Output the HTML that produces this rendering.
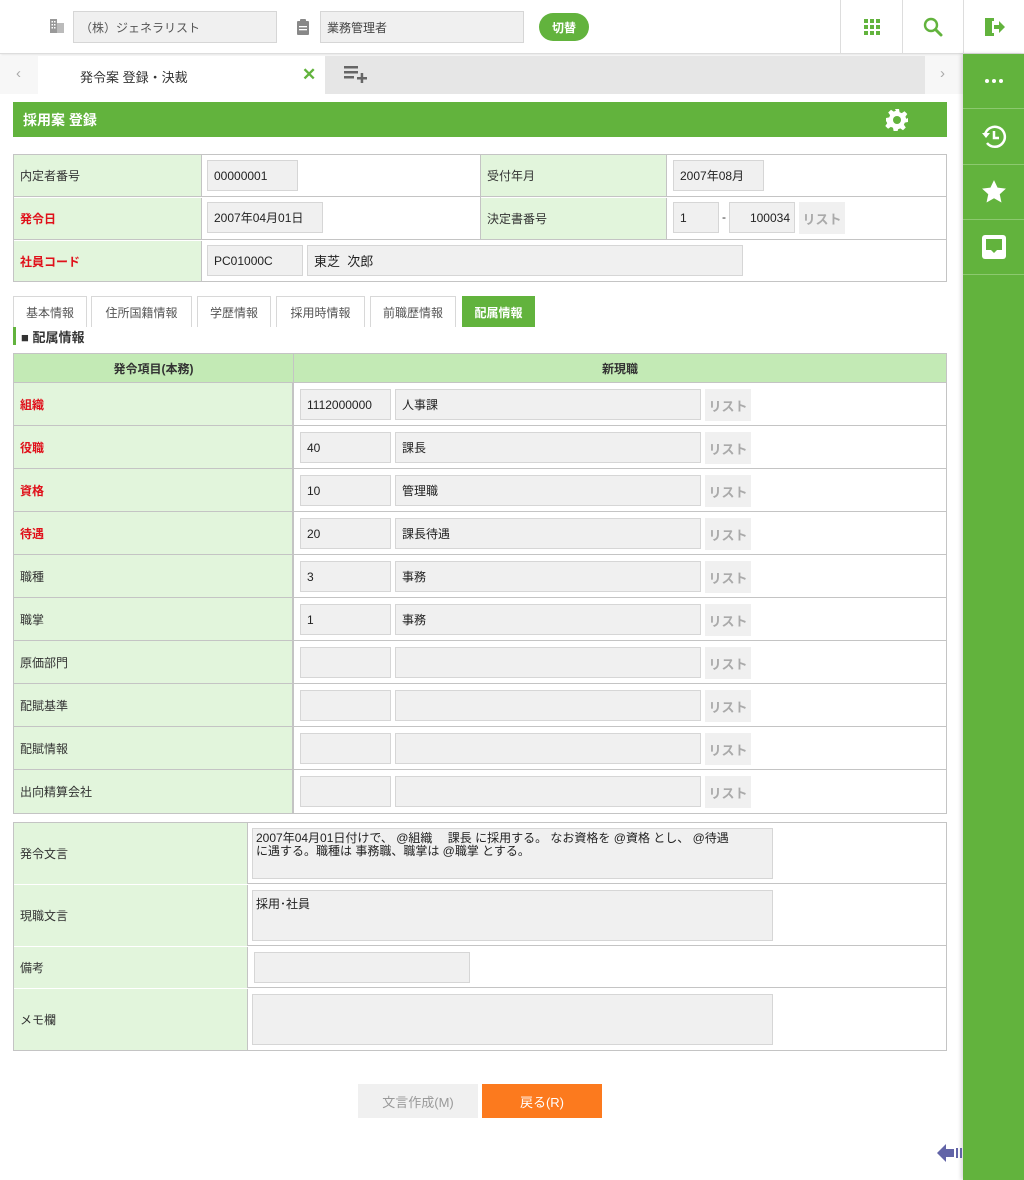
<!DOCTYPE html>
<html><head><meta charset="utf-8"><style>
*{margin:0;padding:0;box-sizing:border-box}
body{width:1024px;height:1180px;position:relative;background:#fff;font-family:"Liberation Sans","Noto Sans CJK JP",sans-serif;font-size:12px;color:#333;overflow:hidden}
.a{position:absolute}
.in{position:absolute;background:#f0f0f0;border:1px solid #d6d6d6;font-size:12px;padding-left:6px;display:flex;align-items:center;color:#222}
.lb{position:absolute;background:#e2f5dc;border-right:1px solid #c4c4c4;font-size:12px;padding-left:6px;display:flex;align-items:center;color:#333}
.red{color:#e0101a;font-weight:bold}
.row{position:absolute;left:13px;width:934px;border-bottom:1px solid #c4c4c4}
.ls{position:absolute;background:#f0f0f0;color:#aaa;font-weight:bold;font-size:13px;display:flex;align-items:center;justify-content:center;width:46px;height:32px}
.tab{position:absolute;top:296px;height:31px;border:1px solid #d8d8d8;border-bottom:none;display:flex;align-items:center;justify-content:center;font-size:12px;color:#555;background:#fff}
.sb{position:absolute;left:963px;width:61px;height:55px;border-bottom:1px solid #8cc96f;display:flex;align-items:center;justify-content:center}
</style></head><body>
<div class="a" style="left:0;top:0;width:1024px;height:54px;background:#fff;border-bottom:1px solid #ddd;box-shadow:0 1px 3px rgba(0,0,0,.12)"></div>
<svg class="a" style="left:49px;top:18px" width="16" height="16" viewBox="0 0 16 16"><rect x="1" y="1" width="7" height="14" fill="#999"/><rect x="8" y="5" width="7" height="10" fill="#bbb"/><g fill="#fff"><rect x="2.5" y="3" width="1.5" height="1.5"/><rect x="5" y="3" width="1.5" height="1.5"/><rect x="2.5" y="6" width="1.5" height="1.5"/><rect x="5" y="6" width="1.5" height="1.5"/><rect x="2.5" y="9" width="1.5" height="1.5"/><rect x="5" y="9" width="1.5" height="1.5"/></g></svg>
<div class="in" style="left:73px;top:11px;width:204px;height:32px;color:#555">（株）ジェネラリスト</div>
<svg class="a" style="left:296px;top:19px" width="14" height="16" viewBox="0 0 14 16"><rect x="1" y="2" width="12" height="14" rx="1" fill="#888"/><rect x="4" y="0" width="6" height="4" rx="1" fill="#888"/><g fill="#fff"><rect x="3" y="7" width="8" height="1.3"/><rect x="3" y="10" width="8" height="1.3"/></g></svg>
<div class="in" style="left:320px;top:11px;width:204px;height:32px;color:#444">業務管理者</div>
<div class="a" style="left:539px;top:13px;width:50px;height:28px;border-radius:14px;background:#62b33d;color:#fff;font-size:12px;font-weight:bold;display:flex;align-items:center;justify-content:center">切替</div>
<div class="a" style="left:840px;top:0;width:1px;height:54px;background:#ddd"></div>
<div class="a" style="left:902px;top:0;width:1px;height:54px;background:#ddd"></div>
<div class="a" style="left:963px;top:0;width:1px;height:54px;background:#ddd"></div>
<svg class="a" style="left:864px;top:19px" width="16" height="16" viewBox="0 0 16 16" fill="#62b33d"><rect x="0" y="0" width="4" height="4"/><rect x="6" y="0" width="4" height="4"/><rect x="12" y="0" width="4" height="4"/><rect x="0" y="6" width="4" height="4"/><rect x="6" y="6" width="4" height="4"/><rect x="12" y="6" width="4" height="4"/><rect x="0" y="12" width="4" height="4"/><rect x="6" y="12" width="4" height="4"/><rect x="12" y="12" width="4" height="4"/></svg>
<svg class="a" style="left:923px;top:17px" width="20" height="20" viewBox="0 0 20 20"><circle cx="8" cy="8" r="6" fill="none" stroke="#62b33d" stroke-width="2.4"/><path d="M12.5 12.5L18 18" stroke="#62b33d" stroke-width="3" stroke-linecap="round"/></svg>
<svg class="a" style="left:983px;top:16px" width="22" height="22" viewBox="0 0 22 22"><path d="M2 2h9v3H6v12h5v3H2z" fill="#62b33d"/><path d="M2 2l7 3v15l-7-3z" fill="#62b33d"/><path d="M11 9h5V5l6 6-6 6v-4h-5z" fill="#62b33d"/></svg>
<div class="a" style="left:0;top:56px;width:38px;height:38px;background:#f7f7f7"></div>
<div class="a" style="left:38px;top:56px;width:887px;height:38px;background:#e6e6e6"></div>
<div class="a" style="left:925px;top:56px;width:38px;height:38px;background:#f7f7f7"></div>
<div class="a" style="left:38px;top:56px;width:287px;height:38px;background:#fff"></div>
<div class="a" style="left:16px;top:65px;color:#aaa;font-size:15px">‹</div>
<div class="a" style="left:940px;top:65px;color:#aaa;font-size:15px">›</div>
<div class="a" style="left:80px;top:67px;font-size:13px;color:#333">発令案 登録・決裁</div>
<div class="a" style="left:302px;top:65px;font-size:17px;font-weight:bold;color:#62b33d">✕</div>
<svg class="a" style="left:344px;top:66px" width="24" height="18" viewBox="0 0 24 18" fill="#666"><rect x="0" y="0" width="14" height="2.5"/><rect x="0" y="5" width="14" height="2.5"/><rect x="0" y="10" width="10" height="2.5"/><rect x="13" y="11" width="10" height="2.5"/><rect x="16.7" y="7" width="2.5" height="10"/></svg>
<div class="a" style="left:963px;top:54px;width:61px;height:1126px;background:#62b33d;box-shadow:-2px 0 4px rgba(0,0,0,.15)"></div>
<div class="sb" style="top:54px"><svg width="18" height="4"><circle cx="2" cy="2" r="2" fill="#fff"/><circle cx="9" cy="2" r="2" fill="#fff"/><circle cx="16" cy="2" r="2" fill="#fff"/></svg></div>
<div class="sb" style="top:110px"><svg width="28" height="28" viewBox="0 0 28 28"><path d="M5 12A10 10 0 1 1 7 20" fill="none" stroke="#fff" stroke-width="2.5"/><path d="M2 10l4 5 4-5z" fill="#fff"/><path d="M14 8v7h5" fill="none" stroke="#fff" stroke-width="2.5"/></svg></div>
<div class="sb" style="top:165px"><svg width="26" height="26" viewBox="0 0 24 24"><path d="M12 1l3.3 7 7.7.9-5.7 5.2 1.6 7.6L12 17.8l-6.9 3.9 1.6-7.6L1 8.9 8.7 8z" fill="#fff"/></svg></div>
<div class="sb" style="top:220px"><svg width="26" height="26" viewBox="0 0 26 26"><rect x="1" y="1" width="24" height="24" rx="3" fill="#fff"/><path d="M5 5h16v11h-5l-3 3-3-3H5z" fill="#62b33d"/></svg></div>
<div class="a" style="left:13px;top:102px;width:934px;height:35px;background:#62b33d;color:#fff;font-weight:bold;font-size:14px;padding-left:10px;display:flex;align-items:center">採用案 登録</div>
<svg class="a" style="left:885px;top:108px" width="24" height="24" viewBox="0 0 24 24"><path fill="#fff" d="M10 1h4l.6 3.2 2.2.9 2.7-1.9 2.8 2.8-1.9 2.7.9 2.2L23 10v4l-3.2.6-.9 2.2 1.9 2.7-2.8 2.8-2.7-1.9-2.2.9L12.6 23h-4l-.6-3.2-2.2-.9-2.7 1.9-2.8-2.8 1.9-2.7-.9-2.2L1 14v-4l3.2-.6.9-2.2L3.2 4.5 6 1.7l2.7 1.9 2.2-.9z"/><circle cx="12" cy="12" r="4" fill="#62b33d"/></svg>
<div class="a" style="left:13px;top:154px;width:934px;height:128px;border:1px solid #c4c4c4"></div>
<div class="row" style="top:154px;height:43px"></div>
<div class="row" style="top:197px;height:43px"></div>
<div class="lb" style="left:14px;top:155px;width:188px;height:41px">内定者番号</div>
<div class="lb red" style="left:14px;top:198px;width:188px;height:41px">発令日</div>
<div class="lb red" style="left:14px;top:241px;width:188px;height:40px">社員コード</div>
<div class="a" style="left:480px;top:155px;width:1px;height:84px;background:#c4c4c4"></div>
<div class="lb" style="left:481px;top:155px;width:186px;height:41px">受付年月</div>
<div class="lb" style="left:481px;top:198px;width:186px;height:41px">決定書番号</div>
<div class="in" style="left:207px;top:160px;width:91px;height:31px">00000001</div>
<div class="in" style="left:207px;top:202px;width:116px;height:31px">2007年04月01日</div>
<div class="in" style="left:207px;top:245px;width:96px;height:31px">PC01000C</div>
<div class="in" style="left:307px;top:245px;width:436px;height:31px;font-size:13px">東芝&nbsp;&nbsp;次郎</div>
<div class="in" style="left:673px;top:160px;width:91px;height:31px">2007年08月</div>
<div class="in" style="left:673px;top:202px;width:46px;height:31px">1</div>
<div class="a" style="left:722px;top:210px">-</div>
<div class="in" style="left:729px;top:202px;width:66px;height:31px;justify-content:flex-end;padding-right:4px">100034</div>
<div class="ls" style="left:799px;top:202px">リスト</div>
<div class="tab" style="left:13px;width:74px">基本情報</div>
<div class="tab" style="left:91px;width:101px">住所国籍情報</div>
<div class="tab" style="left:197px;width:74px">学歴情報</div>
<div class="tab" style="left:276px;width:89px">採用時情報</div>
<div class="tab" style="left:370px;width:86px">前職歴情報</div>
<div class="tab" style="left:462px;width:73px;background:#62b33d;color:#fff;font-weight:bold;border-color:#62b33d">配属情報</div>
<div class="a" style="left:13px;top:327px;width:3px;height:18px;background:#62b33d"></div>
<div class="a" style="left:21px;top:327px;font-size:13px;font-weight:bold;color:#333">■ 配属情報</div>
<div class="a" style="left:13px;top:353px;width:934px;height:461px;border:1px solid #c4c4c4"></div>
<div class="a" style="left:14px;top:354px;width:932px;height:29px;background:#c3eab5;border-bottom:1px solid #c4c4c4"></div>
<div class="a" style="left:14px;top:354px;width:280px;height:29px;border-right:1px solid #c4c4c4;display:flex;align-items:center;justify-content:center;font-weight:bold">発令項目(本務)</div>
<div class="a" style="left:294px;top:354px;width:652px;height:29px;display:flex;align-items:center;justify-content:center;font-weight:bold">新現職</div>
<div class="a" style="left:293px;top:383px;width:1px;height:430px;background:#c4c4c4"></div>

<div class="row" style="top:383px;height:43px"></div><div class="lb red" style="left:14px;top:383px;width:279px;height:42px">組織</div><div class="in" style="left:300px;top:389px;width:91px;height:31px">1112000000</div><div class="in" style="left:395px;top:389px;width:306px;height:31px">人事課</div><div class="ls" style="left:705px;top:389px">リスト</div>
<div class="row" style="top:426px;height:43px"></div><div class="lb red" style="left:14px;top:426px;width:279px;height:42px">役職</div><div class="in" style="left:300px;top:432px;width:91px;height:31px">40</div><div class="in" style="left:395px;top:432px;width:306px;height:31px">課長</div><div class="ls" style="left:705px;top:432px">リスト</div>
<div class="row" style="top:469px;height:43px"></div><div class="lb red" style="left:14px;top:469px;width:279px;height:42px">資格</div><div class="in" style="left:300px;top:475px;width:91px;height:31px">10</div><div class="in" style="left:395px;top:475px;width:306px;height:31px">管理職</div><div class="ls" style="left:705px;top:475px">リスト</div>
<div class="row" style="top:512px;height:43px"></div><div class="lb red" style="left:14px;top:512px;width:279px;height:42px">待遇</div><div class="in" style="left:300px;top:518px;width:91px;height:31px">20</div><div class="in" style="left:395px;top:518px;width:306px;height:31px">課長待遇</div><div class="ls" style="left:705px;top:518px">リスト</div>
<div class="row" style="top:555px;height:43px"></div><div class="lb" style="left:14px;top:555px;width:279px;height:42px">職種</div><div class="in" style="left:300px;top:561px;width:91px;height:31px">3</div><div class="in" style="left:395px;top:561px;width:306px;height:31px">事務</div><div class="ls" style="left:705px;top:561px">リスト</div>
<div class="row" style="top:598px;height:43px"></div><div class="lb" style="left:14px;top:598px;width:279px;height:42px">職掌</div><div class="in" style="left:300px;top:604px;width:91px;height:31px">1</div><div class="in" style="left:395px;top:604px;width:306px;height:31px">事務</div><div class="ls" style="left:705px;top:604px">リスト</div>
<div class="row" style="top:641px;height:43px"></div><div class="lb" style="left:14px;top:641px;width:279px;height:42px">原価部門</div><div class="in" style="left:300px;top:647px;width:91px;height:31px"></div><div class="in" style="left:395px;top:647px;width:306px;height:31px"></div><div class="ls" style="left:705px;top:647px">リスト</div>
<div class="row" style="top:684px;height:43px"></div><div class="lb" style="left:14px;top:684px;width:279px;height:42px">配賦基準</div><div class="in" style="left:300px;top:690px;width:91px;height:31px"></div><div class="in" style="left:395px;top:690px;width:306px;height:31px"></div><div class="ls" style="left:705px;top:690px">リスト</div>
<div class="row" style="top:727px;height:43px"></div><div class="lb" style="left:14px;top:727px;width:279px;height:42px">配賦情報</div><div class="in" style="left:300px;top:733px;width:91px;height:31px"></div><div class="in" style="left:395px;top:733px;width:306px;height:31px"></div><div class="ls" style="left:705px;top:733px">リスト</div>
<div class="lb" style="left:14px;top:770px;width:279px;height:43px">出向精算会社</div><div class="in" style="left:300px;top:776px;width:91px;height:31px"></div><div class="in" style="left:395px;top:776px;width:306px;height:31px"></div><div class="ls" style="left:705px;top:776px">リスト</div>
<div class="a" style="left:13px;top:822px;width:934px;height:229px;border:1px solid #c4c4c4"></div>
<div class="row" style="top:822px;height:62px"></div>
<div class="row" style="top:884px;height:62px"></div>
<div class="row" style="top:946px;height:42px"></div>
<div class="lb" style="left:14px;top:823px;width:234px;height:61px">発令文言</div>
<div class="lb" style="left:14px;top:885px;width:234px;height:61px">現職文言</div>
<div class="lb" style="left:14px;top:947px;width:234px;height:41px">備考</div>
<div class="lb" style="left:14px;top:989px;width:234px;height:61px">メモ欄</div>
<div class="in" style="left:252px;top:828px;width:521px;height:51px;align-items:flex-start;padding:3px 20px 3px 3px;line-height:13px;font-size:12px">2007年04月01日付けで、 @組織　 課長 に採用する。 なお資格を @資格 とし、 @待遇<br>に遇する。職種は 事務職、職掌は @職掌 とする。</div>
<div class="in" style="left:252px;top:890px;width:521px;height:51px;align-items:flex-start;padding:4px 3px">採用･社員</div>
<div class="in" style="left:254px;top:952px;width:216px;height:31px"></div>
<div class="in" style="left:252px;top:994px;width:521px;height:51px"></div>
<div class="a" style="left:358px;top:1084px;width:120px;height:34px;background:#f0f0f0;color:#999;font-size:13px;display:flex;align-items:center;justify-content:center">文言作成(M)</div>
<div class="a" style="left:482px;top:1084px;width:120px;height:34px;background:#fc7a1e;color:#fff;font-size:13px;display:flex;align-items:center;justify-content:center">戻る(R)</div>
<svg class="a" style="left:937px;top:1143px" width="26" height="20" viewBox="0 0 26 20" fill="#6264a7"><path d="M0 10l9-9v5h8v8H9v5z"/><rect x="19" y="5" width="2" height="10"/><rect x="23" y="5" width="2" height="10"/></svg>
</body></html>
